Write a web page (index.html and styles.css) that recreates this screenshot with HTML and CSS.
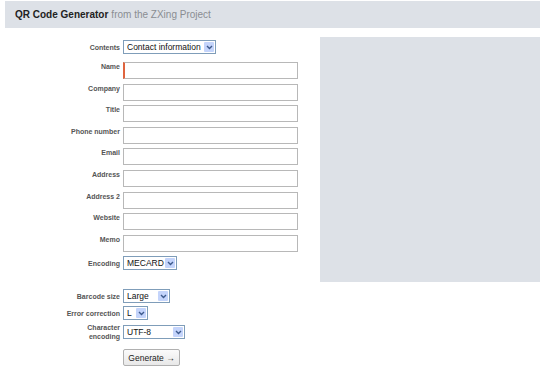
FILE: index.html
```html
<!DOCTYPE html>
<html lang="en">
<head>
    <meta charset="UTF-8">
    <title>QR Code Generator</title>
    <link rel="stylesheet" href="styles.css">
</head>
<body>

<div class="header">
    <span class="title">QR Code Generator</span>
    <span class="sub">from the ZXing Project</span>
</div>

<div class="main">
    <div class="form">
        <div class="row first">
            <label>Contents</label>
            <span class="sel w-contents">
                <select><option>Contact information</option></select>
                <span class="arrow"><svg width="7" height="5" viewBox="0 0 7 5"><polyline points="1,1 3.5,3.5 6,1" fill="none" stroke="#3d5a8c" stroke-width="1.4"/></svg></span>
            </span>
        </div>

        <div class="row field"><label>Name</label><input type="text" class="active"></div>
        <div class="row field"><label>Company</label><input type="text"></div>
        <div class="row field"><label>Title</label><input type="text"></div>
        <div class="row field"><label>Phone number</label><input type="text"></div>
        <div class="row field"><label>Email</label><input type="text"></div>
        <div class="row field"><label>Address</label><input type="text"></div>
        <div class="row field"><label>Address 2</label><input type="text"></div>
        <div class="row field"><label>Website</label><input type="text"></div>
        <div class="row field"><label>Memo</label><input type="text"></div>

        <div class="row">
            <label>Encoding</label>
            <span class="sel w-enc">
                <select><option>MECARD</option></select>
                <span class="arrow"><svg width="7" height="5" viewBox="0 0 7 5"><polyline points="1,1 3.5,3.5 6,1" fill="none" stroke="#3d5a8c" stroke-width="1.4"/></svg></span>
            </span>
        </div>

        <div class="row options">
            <label>Barcode size</label>
            <span class="sel w-size">
                <select><option>Large</option></select>
                <span class="arrow"><svg width="7" height="5" viewBox="0 0 7 5"><polyline points="1,1 3.5,3.5 6,1" fill="none" stroke="#3d5a8c" stroke-width="1.4"/></svg></span>
            </span>
        </div>
        <div class="row tight">
            <label>Error correction</label>
            <span class="sel w-ec">
                <select><option>L</option></select>
                <span class="arrow"><svg width="7" height="5" viewBox="0 0 7 5"><polyline points="1,1 3.5,3.5 6,1" fill="none" stroke="#3d5a8c" stroke-width="1.4"/></svg></span>
            </span>
        </div>
        <div class="row tight">
            <label class="two">Character<br>encoding</label>
            <span class="sel w-charset">
                <select><option>UTF-8</option></select>
                <span class="arrow"><svg width="7" height="5" viewBox="0 0 7 5"><polyline points="1,1 3.5,3.5 6,1" fill="none" stroke="#3d5a8c" stroke-width="1.4"/></svg></span>
            </span>
        </div>

        <button class="btn">Generate &rarr;</button>
    </div>

    <div class="panel"></div>
</div>

</body>
</html>
```

FILE: styles.css
```css
body {
    margin: 0;
    font-family: "Liberation Sans", Arial, sans-serif;
    background-color: #fff;
    overflow: hidden;
}

.header {
    margin: 1px 0 0 5px;
    height: 27px;
    padding-left: 10px;
    display: flex;
    align-items: center;
    gap: 3px;
    font-size: 10px;
    background-color: #dde1e7;
}

.title {
    font-weight: bold;
    color: #222;
}

.sub {
    color: #8a8d92;
}

.main {
    display: flex;
    margin-top: 9px;
}

.form {
    width: 320px;
    flex-shrink: 0;
    padding-top: 3px;
}

.panel {
    width: 220px;
    height: 245px;
    flex-shrink: 0;
    background-color: #dde1e7;
}

.row {
    display: flex;
    align-items: center;
    gap: 3px;
}

.row label {
    width: 120px;
    flex-shrink: 0;
    text-align: right;
    font-size: 7px;
    font-weight: bold;
    color: #555;
}

.row.first {
    margin-bottom: 8px;
}

.row.field {
    align-items: flex-start;
    margin-bottom: 4.6px;
}

.row.field label {
    padding-top: 1px;
}

.row.options {
    margin-top: 19px;
}

.row.tight {
    margin-top: 3px;
}

.row label.two {
    line-height: 9px;
}

input {
    box-sizing: border-box;
    width: 175px;
    height: 17px;
    margin: 0;
    border: 1px solid #b8b8b8;
    border-radius: 0;
    background-color: #fff;
}

input.active {
    border-left: 2px solid #e0643e;
}

.sel {
    position: relative;
    display: flex;
    height: 14px;
}

.sel select {
    -webkit-appearance: none;
    appearance: none;
    display: block;
    box-sizing: border-box;
    height: 14px;
    margin: 0;
    padding: 0 0 0 3px;
    border: 1px solid #7f9db9;
    border-radius: 0;
    background-color: #fff;
    color: #111;
    font-family: "Liberation Sans", Arial, sans-serif;
    font-size: 8.5px;
    line-height: 12px;
}

.sel .arrow {
    position: absolute;
    top: 2px;
    right: 2px;
    width: 10px;
    height: 10px;
    display: flex;
    align-items: center;
    justify-content: center;
    border-radius: 1px;
    background-color: #c4d4fb;
}

.w-contents select { width: 93px; }
.w-enc select { width: 54px; }
.w-size select { width: 47px; }
.w-ec select { width: 25px; }
.w-charset select { width: 62px; }

.btn {
    display: block;
    margin: 8px 0 0 123px;
    width: 57px;
    height: 17px;
    padding: 0;
    border: 1px solid #b0b0b0;
    border-radius: 2px;
    background: linear-gradient(#fbfbfb, #e8e8e8);
    color: #222;
    font-family: "Liberation Sans", Arial, sans-serif;
    font-size: 8.5px;
}
```
